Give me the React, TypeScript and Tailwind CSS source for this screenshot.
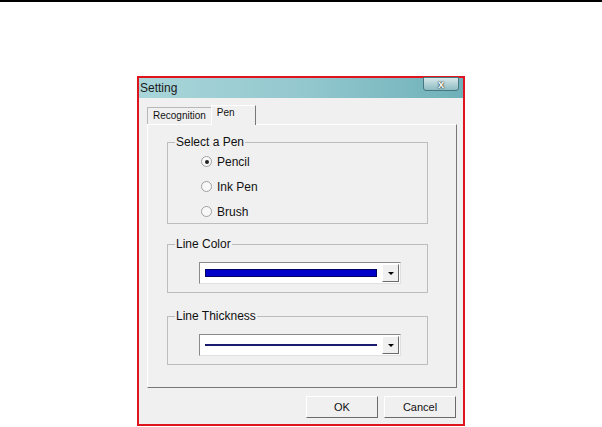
import React from 'react';

function Radio({ checked, label }: { checked?: boolean; label: string }) {
  return (
    <div className="flex items-center h-[25px]">
      <span className="relative w-[11px] h-[11px] rounded-full border border-[#a0a0a0] bg-[#f8f8f8] flex items-center justify-center">
        {checked && <span className="w-[4px] h-[4px] rounded-full bg-[#222]" />}
      </span>
      <span className="ml-[5px] text-[12px] text-[#111]">{label}</span>
    </div>
  );
}

function Group({ title, className, children }: { title: string; className?: string; children: React.ReactNode }) {
  return (
    <div className={`relative border border-[#bdbdbd] ${className ?? ''}`}>
      <span className="absolute -top-[8px] left-[7px] bg-[#f0f0f0] px-[1px] text-[12px] leading-[14px] text-[#111]">{title}</span>
      {children}
    </div>
  );
}

function Combo({ children }: { children: React.ReactNode }) {
  return (
    <div className="flex h-[22px] w-[202px] border border-t-[#8a8a8a] border-l-[#8a8a8a] border-b-[#e0e0e0] border-r-[#e0e0e0] bg-white">
      <div className="flex-1 flex items-center pl-[5px] pr-[5px]">{children}</div>
      <div className="w-[17px] my-[1px] mr-[1px] bg-[#f0f0f0] border border-t-white border-l-white border-b-[#6a6a6a] border-r-[#6a6a6a] flex items-center justify-center">
        <span className="w-0 h-0 border-l-[3px] border-r-[3px] border-t-[3px] border-l-transparent border-r-transparent border-t-black" />
      </div>
    </div>
  );
}

export default function App() {
  return (
    <div className="w-[602px] h-[427px] bg-white overflow-hidden" style={{ fontFamily: '"Liberation Sans", Arial, sans-serif' }}>
      <div className="h-[2px] bg-black" />
      <div className="pt-[74px] pl-[137px]">
        <div className="w-[328px] h-[350px] border-2 border-[#e0141e] bg-[#f0f0f0] flex flex-col">
          {/* Title bar */}
          <div className="relative h-[20px] bg-gradient-to-r from-[#a9d6da] via-[#93c8ce] to-[#6fb1b9] flex items-center">
            <span className="pl-[1px] text-[12px] text-[#1a1a1a]">Setting</span>
            <div className="absolute right-[4px] -top-[1px] w-[36px] h-[14px] rounded-b-[3px] border border-[#46767e] bg-gradient-to-b from-[#d6e8ea] to-[#8dbcc2] flex items-center justify-center">
              <span className="text-[11px] font-bold leading-none text-white" style={{ textShadow: '0 0 2px #222, 0 0 1px #222' }}>x</span>
            </div>
          </div>
          {/* Body */}
          <div className="flex-1 flex flex-col pl-[8px] pr-[6px]">
            <div className="flex items-end h-[26px]">
              <div className="h-[17px] px-[5px] border border-b-0 border-[#b8b8b8] bg-[#f0f0f0] text-[10px] leading-[16px] text-[#111]">Recognition</div>
              <div className="h-[20px] w-[45px] -ml-[1px] px-[5px] border border-b-0 border-l-white border-t-white border-r-[#777] bg-[#f0f0f0] text-[10px] leading-[14px] text-[#111] relative top-[1px] z-10">Pen</div>
            </div>
            <div className="h-[264px] w-[310px] border border-t-white border-l-white border-r-[#777] border-b-[#777] pt-[17px] pl-[19px]">
              <Group title="Select a Pen" className="w-[261px] h-[82px]">
                <div className="pl-[33px] pt-[6px] flex flex-col">
                  <Radio checked label="Pencil" />
                  <Radio label="Ink Pen" />
                  <Radio label="Brush" />
                </div>
              </Group>
              <Group title="Line Color" className="w-[261px] h-[49px] mt-[20px]">
                <div className="pl-[31px] pt-[17px]">
                  <Combo>
                    <div className="h-[8px] w-full bg-[#0000c8] border border-[#000060]" />
                  </Combo>
                </div>
              </Group>
              <Group title="Line Thickness" className="w-[261px] h-[49px] mt-[23px]">
                <div className="pl-[31px] pt-[17px]">
                  <Combo>
                    <div className="h-[2px] w-full bg-[#1a1a70]" />
                  </Combo>
                </div>
              </Group>
            </div>
            <div className="flex justify-end gap-[6px] mt-[8px] pr-[1px]">
              <button className="w-[72px] h-[22px] border border-t-white border-l-white border-r-[#6a6a6a] border-b-[#6a6a6a] bg-[#f0f0f0] text-[11px] text-[#111]">OK</button>
              <button className="w-[72px] h-[22px] border border-t-white border-l-white border-r-[#6a6a6a] border-b-[#6a6a6a] bg-[#f0f0f0] text-[11px] text-[#111]">Cancel</button>
            </div>
          </div>
        </div>
      </div>
    </div>
  );
}
